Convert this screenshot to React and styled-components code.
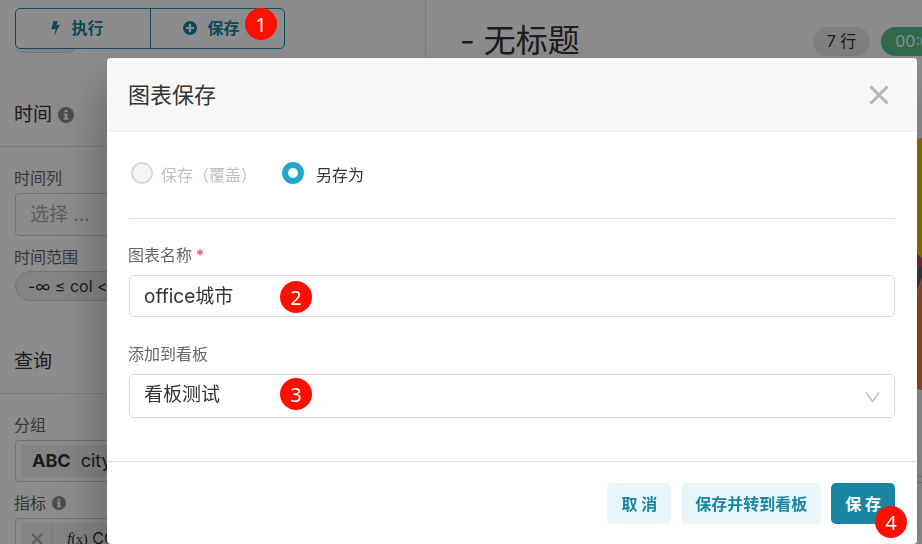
import React from "react";
import styled, { createGlobalStyle } from "styled-components";

const GlobalStyle = createGlobalStyle`
  * { box-sizing: border-box; }
  body {
    margin: 0;
    background: #fff;
    color: #333;
    font-family: Inter, "Noto Sans CJK SC", sans-serif;
    font-size: 16px;
    line-height: 24px;
    overflow: hidden;
  }
  button, input, select { font: inherit; }
`;

const Page = styled.div`
  display: flex;
  height: 100vh;
  overflow: hidden;
`;

const Sidebar = styled.aside`
  flex: 0 0 426px;
  border-right: 1px solid #e0e0e0;
  padding-top: 8px;
`;

const ActionBar = styled.div`
  display: grid;
  grid-template-columns: 1fr 1fr;
  width: 270px;
  height: 41px;
  margin-left: 15px;
  border: 1px solid #1a85a0;
  border-radius: 5px;
  background: #fff;
`;

const ActionButton = styled.button`
  flex: 1;
  display: flex;
  align-items: center;
  justify-content: center;
  gap: 10px;
  padding: 0 12px 2px 0;
  border: 0;
  border-left: ${(p) => (p.$divided ? "1px solid #1a85a0" : "0")};
  background: none;
  color: #1a85a0;
  font-weight: 700;
`;

const ActionSlot = styled.div`
  display: flex;
  position: relative;
`;

const HiddenPill = styled.div`
  width: 60px;
  height: 4px;
  margin-left: 15px;
  border: 1px solid #d8d8d8;
  border-top: 0;
  border-radius: 0 0 14px 14px / 0 0 4px 4px;
  background: #f0f0f0;
`;

const Section = styled.section`
  padding: 0 15px;
`;

const SectionTitle = styled.h2`
  display: flex;
  align-items: center;
  gap: 6px;
  height: ${(p) => p.$height}px;
  margin: 0 -15px;
  padding: ${(p) => p.$top}px 14px 0;
  border-bottom: 1px solid #e0e0e0;
  font-size: 19px;
  line-height: 28px;
  font-weight: 400;
`;

const SideLabel = styled.label`
  display: flex;
  align-items: center;
  gap: 6px;
  margin: ${(p) => p.$top}px 0 0 -1px;
  color: #666;
  line-height: 24px;
`;

const SideSelect = styled.select`
  display: block;
  appearance: none;
  width: 100%;
  height: 43px;
  margin-top: 3px;
  padding: 0 14px;
  border: 1px solid #ccc;
  border-radius: 4px;
  background: #fff;
  color: #aaa;
  font-size: 19px;
  opacity: 1;
`;

const RangePill = styled.button`
  display: block;
  height: 30px;
  margin-top: 2px;
  margin-bottom: 8px;
  padding: 0 12px;
  border: 1px solid #d4d4d4;
  border-radius: 15px;
  background: #f0f0f0;
  color: #333;
  line-height: 28px;
`;

const TagBox = styled.div`
  display: flex;
  height: 42px;
  margin-top: 3px;
  padding: 4px 5px;
  border: 1px solid #ccc;
  border-radius: 4px;
`;

const Tag = styled.div`
  flex: 1;
  display: flex;
  align-items: center;
  gap: ${(p) => (p.$removable ? 14 : 10)}px;
  padding-left: ${(p) => (p.$removable ? 0 : 11)}px;
  border-radius: 2px;
  background: #f0f0f0;
  font-size: ${(p) => (p.$removable ? 16 : 18)}px;
  white-space: nowrap;

  strong { font-weight: 700; }
  i { font-family: "Liberation Serif", serif; font-size: 16px; }
  i span { font-style: normal; font-size: 14px; }
`;

const RemoveButton = styled.button`
  display: flex;
  align-items: center;
  justify-content: center;
  width: 32px;
  height: 100%;
  padding: 0;
  border: 0;
  border-right: 1px solid #dcdcdc;
  background: none;
  color: #b2b2b2;
`;

const Main = styled.main`
  flex: 1;
  min-width: 0;
  padding-top: 18px;
`;

const ChartHeader = styled.header`
  display: flex;
  align-items: center;
  height: 46px;
  padding-left: 34px;
  white-space: nowrap;
`;

const ChartTitle = styled.h1`
  flex: 1;
  margin: 0;
  font-size: 32px;
  line-height: 46px;
  font-weight: 400;
`;

const Chip = styled.span`
  flex: none;
  height: 29px;
  margin-right: ${(p) => (p.$green ? -57 : 11)}px;
  padding: 0 14px;
  border-radius: 15px;
  background: ${(p) => (p.$green ? "#5ac189" : "#e8e8e8")};
  color: ${(p) => (p.$green ? "#fff" : "#333")};
  line-height: 28px;
`;

const ChartArea = styled.div`
  display: flex;
  justify-content: flex-end;
  height: 412px;
  padding-top: 74px;
  overflow: hidden;
`;

const ResultHandle = styled.div`
  height: 7px;
  border: 1px solid #ccc;
  border-width: 1px 0;
`;

const Mask = styled.div`
  position: fixed;
  inset: 0;
  z-index: 10;
  padding: 58px 5px 0 107px;
  background: rgba(0, 0, 0, 0.45);
`;

const Modal = styled.form`
  border-radius: 4px;
  background: #fff;
  box-shadow: -8px 24px 48px rgba(0, 0, 0, 0.26);
`;

const ModalHeader = styled.header`
  display: flex;
  align-items: center;
  justify-content: space-between;
  height: 74px;
  padding: 0 28px 0 21px;
  border-bottom: 1px solid #eee;
  border-radius: 4px 4px 0 0;
  background: #f7f7f7;

  h2 { margin: 0; font-size: 22px; line-height: 32px; font-weight: 400; }
`;

const CloseButton = styled.button`
  display: flex;
  padding: 0;
  border: 0;
  background: none;
  color: #b2b5c8;
`;

const ModalBody = styled.div`
  padding: 0 22px 43px;
`;

const RadioRow = styled.div`
  display: flex;
  gap: 23px;
  height: 87px;
  padding-top: 29px;
  border-bottom: 1px solid #ddd;
`;

const RadioLabel = styled.label`
  display: flex;
  align-items: flex-start;
  gap: ${(p) => (p.$disabled ? 8 : 12)}px;
  color: ${(p) => (p.$disabled ? "#bfbfbf" : "#333")};
  line-height: 28px;

  input {
    appearance: none;
    width: 22px;
    height: 22px;
    margin: 1px 0 0 2px;
    border: 2px solid #d9d9d9;
    border-radius: 50%;
    background: #f5f5f5;
  }
  input:checked { border: 6px solid #20a7c9; background: #fff; }
`;

const FieldLabel = styled.label`
  display: block;
  margin: ${(p) => p.$top}px 0 0 -1px;
  color: #666;
  line-height: 24px;

  span { margin-left: 4px; color: #e04355; }
`;

const Control = styled.div`
  position: relative;
  margin-top: 8px;

  input, select {
    display: block;
    appearance: none;
    width: 100%;
    height: 42px;
    padding: 0 14px 4px;
    border: 1px solid #d9d9e5;
    border-radius: 5px;
    outline: 0;
    background: #fff;
    color: #333;
    font-size: 19px;
  }
  select { height: 44px; padding-bottom: 2px; border-color: #d9d9d9; }
`;

const Arrow = styled.svg`
  position: absolute;
  right: 15px;
  top: 17px;
  pointer-events: none;
`;

const ModalFooter = styled.footer`
  display: flex;
  justify-content: flex-end;
  gap: 10px;
  height: 83px;
  padding: 21px 22px;
  border-top: 1px solid #ddd;
`;

const FooterButton = styled.button`
  height: 41px;
  padding: 0 14px;
  border: 0;
  border-radius: 5px;
  background: ${(p) => (p.$primary ? "#1a85a0" : "#e8f5f9")};
  color: ${(p) => (p.$primary ? "#fff" : "#1a85a0")};
  font-weight: 700;
`;

const BadgeAnchor = styled.div`
  position: relative;
`;

const Badge = styled.span`
  position: absolute;
  z-index: 20;
  display: flex;
  align-items: center;
  justify-content: center;
  width: 32px;
  height: 32px;
  border-radius: 50%;
  background: #ff0f00;
  color: #fff;
  font: 400 20px "Noto Sans", sans-serif;
`;

const ActionBadge = styled(Badge)`
  right: 7px;
  top: -1px;
`;

const FieldBadge = styled(Badge)`
  left: 151px;
  top: ${(p) => p.$top}px;
`;

const CornerBadge = styled(Badge)`
  right: -12px;
  bottom: -15px;
`;

const InfoIcon = ({ size }) => (
  <svg width={size} height={size} viewBox="0 0 16 16" aria-hidden="true">
    <circle cx="8" cy="8" r="8" fill="#8c8c8c" />
    <path d="M6.6 3h2.8v2.3H6.6zM5.6 6.5h3.8v4.6h1.1v1.7H5.6v-1.7h1.1V8.2H5.6z" fill="#fff" />
  </svg>
);

const BoltIcon = () => (
  <svg width="11" height="16" viewBox="0 0 10 16" aria-hidden="true">
    <path d="M3 1h4.4L5.8 5.2 9.4 4.5 3.8 15.4l1.3-6.7-4.3.9z" fill="currentColor" />
  </svg>
);

const PlusIcon = () => (
  <svg width="14" height="14" viewBox="0 0 14 14" aria-hidden="true">
    <circle cx="7" cy="7" r="7" fill="currentColor" />
    <path d="M7 3v8M3 7h8" stroke="#fff" strokeWidth="2.2" />
  </svg>
);

const CrossIcon = ({ size, weight }) => (
  <svg width={size} height={size} viewBox="0 0 20 20" aria-hidden="true">
    <path d="M1.5 1.5l17 17M18.5 1.5l-17 17" stroke="currentColor" strokeWidth={weight} />
  </svg>
);

const PieEdge = () => (
  <svg width="6" height="252" viewBox="0 0 6 252" aria-hidden="true">
    <path d="M0 1L6 0V130L0 116z" fill="#fcc700" />
    <path d="M0 115L6 120V130H0z" fill="#e04355" />
    <path d="M0 129H6V140L0 156z" fill="#666" />
    <path d="M0 157L6 141V252L0 251z" fill="#ff7f44" />
  </svg>
);

export default function App() {
  return (
    <>
      <GlobalStyle />
      <Page>
        <Sidebar>
          <ActionBar>
            <ActionButton type="button"><BoltIcon />执行</ActionButton>
            <ActionSlot>
              <ActionButton type="button" $divided><PlusIcon />保存</ActionButton>
              <ActionBadge>1</ActionBadge>
            </ActionSlot>
          </ActionBar>
          <HiddenPill />
          <Section>
            <SectionTitle $height={94} $top={30}>时间<InfoIcon size={16} /></SectionTitle>
            <SideLabel htmlFor="time-column" $top={19}>时间列</SideLabel>
            <SideSelect id="time-column" defaultValue="">
              <option value="">选择 ...</option>
            </SideSelect>
            <SideLabel htmlFor="time-range" $top={9}>时间范围</SideLabel>
            <RangePill id="time-range" type="button">-∞ ≤ col &lt; ∞</RangePill>
          </Section>
          <Section>
            <SectionTitle $height={85} $top={21}>查询</SectionTitle>
            <SideLabel as="div" $top={19}>分组</SideLabel>
            <TagBox>
              <Tag><strong>ABC</strong>city</Tag>
            </TagBox>
            <SideLabel as="div" $top={9}>指标<InfoIcon size={14} /></SideLabel>
            <TagBox>
              <Tag $removable>
                <RemoveButton type="button" aria-label="移除"><CrossIcon size={12} weight={4} /></RemoveButton>
                <span><i>f<span>(x)</span></i> COUNT(*)</span>
              </Tag>
            </TagBox>
          </Section>
        </Sidebar>
        <Main>
          <ChartHeader>
            <ChartTitle>- 无标题</ChartTitle>
            <Chip>7 行</Chip>
            <Chip $green>00:00:00</Chip>
          </ChartHeader>
          <ChartArea><PieEdge /></ChartArea>
          <ResultHandle />
        </Main>
      </Page>
      <Mask>
        <Modal role="dialog" aria-labelledby="save-title" onSubmit={(e) => e.preventDefault()}>
          <ModalHeader>
            <h2 id="save-title">图表保存</h2>
            <CloseButton type="button" aria-label="关闭"><CrossIcon size={20} weight={3} /></CloseButton>
          </ModalHeader>
          <ModalBody>
            <RadioRow>
              <RadioLabel $disabled><input type="radio" name="mode" disabled />保存（覆盖）</RadioLabel>
              <RadioLabel><input type="radio" name="mode" defaultChecked />另存为</RadioLabel>
            </RadioRow>
            <FieldLabel htmlFor="chart-name" $top={24}>图表名称<span>*</span></FieldLabel>
            <Control>
              <input id="chart-name" type="text" defaultValue="office城市" />
              <FieldBadge $top={6}>2</FieldBadge>
            </Control>
            <FieldLabel htmlFor="dashboard" $top={25}>添加到看板</FieldLabel>
            <Control>
              <select id="dashboard" defaultValue="看板测试">
                <option>看板测试</option>
              </select>
              <Arrow width="15" height="12" viewBox="0 0 15 12" aria-hidden="true">
                <path d="M1 1.5l6.5 9 6.5-9" fill="none" stroke="#bfbfbf" strokeWidth="1.5" />
              </Arrow>
              <FieldBadge $top={4}>3</FieldBadge>
            </Control>
          </ModalBody>
          <ModalFooter>
            <FooterButton type="button">取 消</FooterButton>
            <FooterButton type="button">保存并转到看板</FooterButton>
            <BadgeAnchor>
              <FooterButton type="submit" $primary>保 存</FooterButton>
              <CornerBadge>4</CornerBadge>
            </BadgeAnchor>
          </ModalFooter>
        </Modal>
      </Mask>
    </>
  );
}
